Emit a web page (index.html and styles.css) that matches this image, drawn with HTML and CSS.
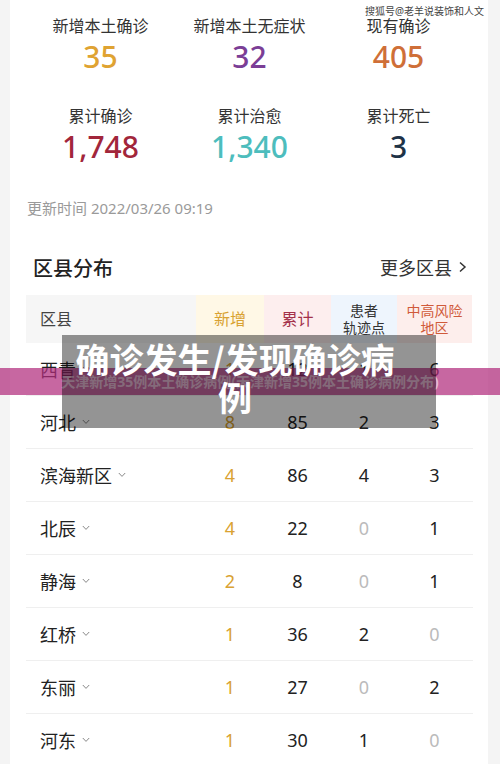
FILE: index.html
```html
<!DOCTYPE html>
<html lang="zh-CN">
<head>
  <meta charset="UTF-8">
  <title>天津疫情数据</title>
  <link rel="stylesheet" href="styles.css">
</head>
<body>

  <div class="card">
    <div class="stats">
      <div class="stat">
        <div class="stat-label">新增本土确诊</div>
        <div class="stat-num gold">35</div>
      </div>
      <div class="stat">
        <div class="stat-label">新增本土无症状</div>
        <div class="stat-num purple">32</div>
      </div>
      <div class="stat">
        <div class="stat-label">现有确诊</div>
        <div class="stat-num orange">405</div>
      </div>
      <div class="stat">
        <div class="stat-label">累计确诊</div>
        <div class="stat-num red">1,748</div>
      </div>
      <div class="stat">
        <div class="stat-label">累计治愈</div>
        <div class="stat-num teal">1,340</div>
      </div>
      <div class="stat">
        <div class="stat-label">累计死亡</div>
        <div class="stat-num navy">3</div>
      </div>
    </div>

    <p class="update-time">更新时间 2022/03/26 09:19</p>

    <div class="section-head">
      <h3>区县分布</h3>
      <span class="more">更多区县
        <svg width="10" height="12" viewBox="0 0 10 12"><polyline points="3,1.5 8,6 3,10.5" fill="none" stroke="#333" stroke-width="1.5"/></svg>
      </span>
    </div>

    <div class="table">
      <div class="row head">
        <div class="cell name c-area">区县</div>
        <div class="cell c-new">新增</div>
        <div class="cell c-total">累计</div>
        <div class="cell c-track">患者<br>轨迹点</div>
        <div class="cell c-risk">中高风险<br>地区</div>
      </div>
      <div id="rows"></div>
    </div>

    <div class="watermark">搜狐号@老羊说装饰和人文</div>

    <div class="overlay">
      <div class="band">天津新增35例本土确诊病例(天津新增35例本土确诊病例分布)</div>
      <div class="caption">确诊发生/发现确诊病例</div>
    </div>
  </div>

  <script>
    let districts = [
      ["西青", 1, 12, 1, 6],
      ["河北", 8, 85, 2, 3],
      ["滨海新区", 4, 86, 4, 3],
      ["北辰", 4, 22, 0, 1],
      ["静海", 2, 8, 0, 1],
      ["红桥", 1, 36, 2, 0],
      ["东丽", 1, 27, 0, 2],
      ["河东", 1, 30, 1, 0]
    ];

    let chevron = '<svg width="8" height="6" viewBox="0 0 8 6"><polyline points="0.8,1 4,4.4 7.2,1" fill="none" stroke="#888" stroke-width="1"/></svg>';

    let html = "";
    districts.forEach(function (d) {
      html += `<div class="row">
        <div class="cell name">${d[0]} ${chevron}</div>
        <div class="cell num gold">${d[1]}</div>
        <div class="cell num ${d[2] === 0 ? "zero" : ""}">${d[2]}</div>
        <div class="cell num ${d[3] === 0 ? "zero" : ""}">${d[3]}</div>
        <div class="cell num ${d[4] === 0 ? "zero" : ""}">${d[4]}</div>
      </div>`;
    });
    document.getElementById("rows").innerHTML = html;
  </script>

</body>
</html>
```

FILE: styles.css
```css
body {
  margin: 0;
  padding: 0 12px 0 10px;
  background: #f4f4f4;
  font-family: "Noto Sans", "Noto Sans CJK SC", sans-serif;
  color: #222;
  height: 764px;
  overflow: hidden;
}

.card {
  position: relative;
  background: white;
  min-height: 764px;
  padding: 15px 15px 0 16px;
  box-sizing: border-box;
}

/* Top statistics */
.stats {
  display: grid;
  grid-template-columns: repeat(3, 1fr);
  row-gap: 30px;
}

.stat {
  text-align: center;
}

.stat-label {
  font-size: 16px;
  line-height: 22px;
  color: #333;
}

.stat-num {
  margin-top: 2px;
  font-size: 30px;
  line-height: 36px;
  font-weight: 500;
}

.gold { color: #dfa332; }
.purple { color: #7b3e96; }
.orange { color: #cf6f38; }
.red { color: #a2263b; }
.teal { color: #4dbdbd; }
.navy { color: #1e3347; }

.update-time {
  margin: 33px 0 0 1px;
  font-size: 15px;
  line-height: 20px;
  color: #9a9a9a;
}

.section-head {
  display: flex;
  justify-content: space-between;
  align-items: center;
  margin-top: 35px;
  height: 28px;
  padding: 0 6px 0 7px;
}

.section-head h3 {
  margin: 0;
  font-size: 20px;
  font-weight: 500;
  color: #222;
}

.more {
  display: flex;
  align-items: center;
  gap: 5px;
  font-size: 18px;
  color: #333;
}

/* District table */
.table {
  margin-top: 14px;
}

.row {
  display: grid;
  grid-template-columns: 170px 68px 67px 66px 75px;
  height: 53px;
  border-bottom: 1px solid #efefef;
  box-sizing: border-box;
}

.row.head {
  height: 48px;
  border-bottom: none;
}

.cell {
  display: flex;
  align-items: center;
  justify-content: center;
  text-align: center;
}

.cell.name {
  justify-content: flex-start;
  padding-left: 14px;
  font-size: 18px;
  color: #222;
  gap: 6px;
}

.head .cell {
  font-size: 14px;
  line-height: 17px;
}

.head .cell.name {
  font-size: 16px;
  color: #444;
}

.c-area { background: #f6f6f6; }
.c-new { background: #fff8e6; color: #d9a232; font-size: 16px !important; }
.c-total { background: #fdeeee; color: #a3304a; font-size: 16px !important; }
.c-track { background: #eef5fd; color: #333; }
.c-risk { background: #fdeeec; color: #d05a3a; }

.cell.num {
  font-size: 18px;
  color: #222;
}

.cell.num.gold { color: #d9a232; }
.cell.num.zero { color: #bbb; }

/* Watermark and caption overlay */
.watermark {
  position: absolute;
  top: 4px;
  right: 4px;
  font-size: 10px;
  line-height: 14px;
  color: #444;
  text-shadow: 0 0 2px white;
}

.overlay {
  position: absolute;
  top: 335px;
  left: -10px;
  width: 500px;
  height: 93px;
}

.band {
  position: absolute;
  top: 33px;
  left: 0;
  right: 0;
  height: 27px;
  background: rgba(178, 45, 125, 0.72);
  color: rgba(255, 255, 255, 0.55);
  font-size: 14px;
  font-weight: bold;
  line-height: 27px;
  text-align: center;
  white-space: nowrap;
}

.caption {
  position: absolute;
  top: 0;
  left: 62px;
  width: 374px;
  height: 93px;
  box-sizing: border-box;
  padding: 5px 38px 0 10px;
  background: rgba(0, 0, 0, 0.42);
  color: white;
  font-family: "Noto Sans CJK SC", sans-serif;
  font-size: 34px;
  font-weight: bold;
  line-height: 38px;
  text-align: center;
}
```
